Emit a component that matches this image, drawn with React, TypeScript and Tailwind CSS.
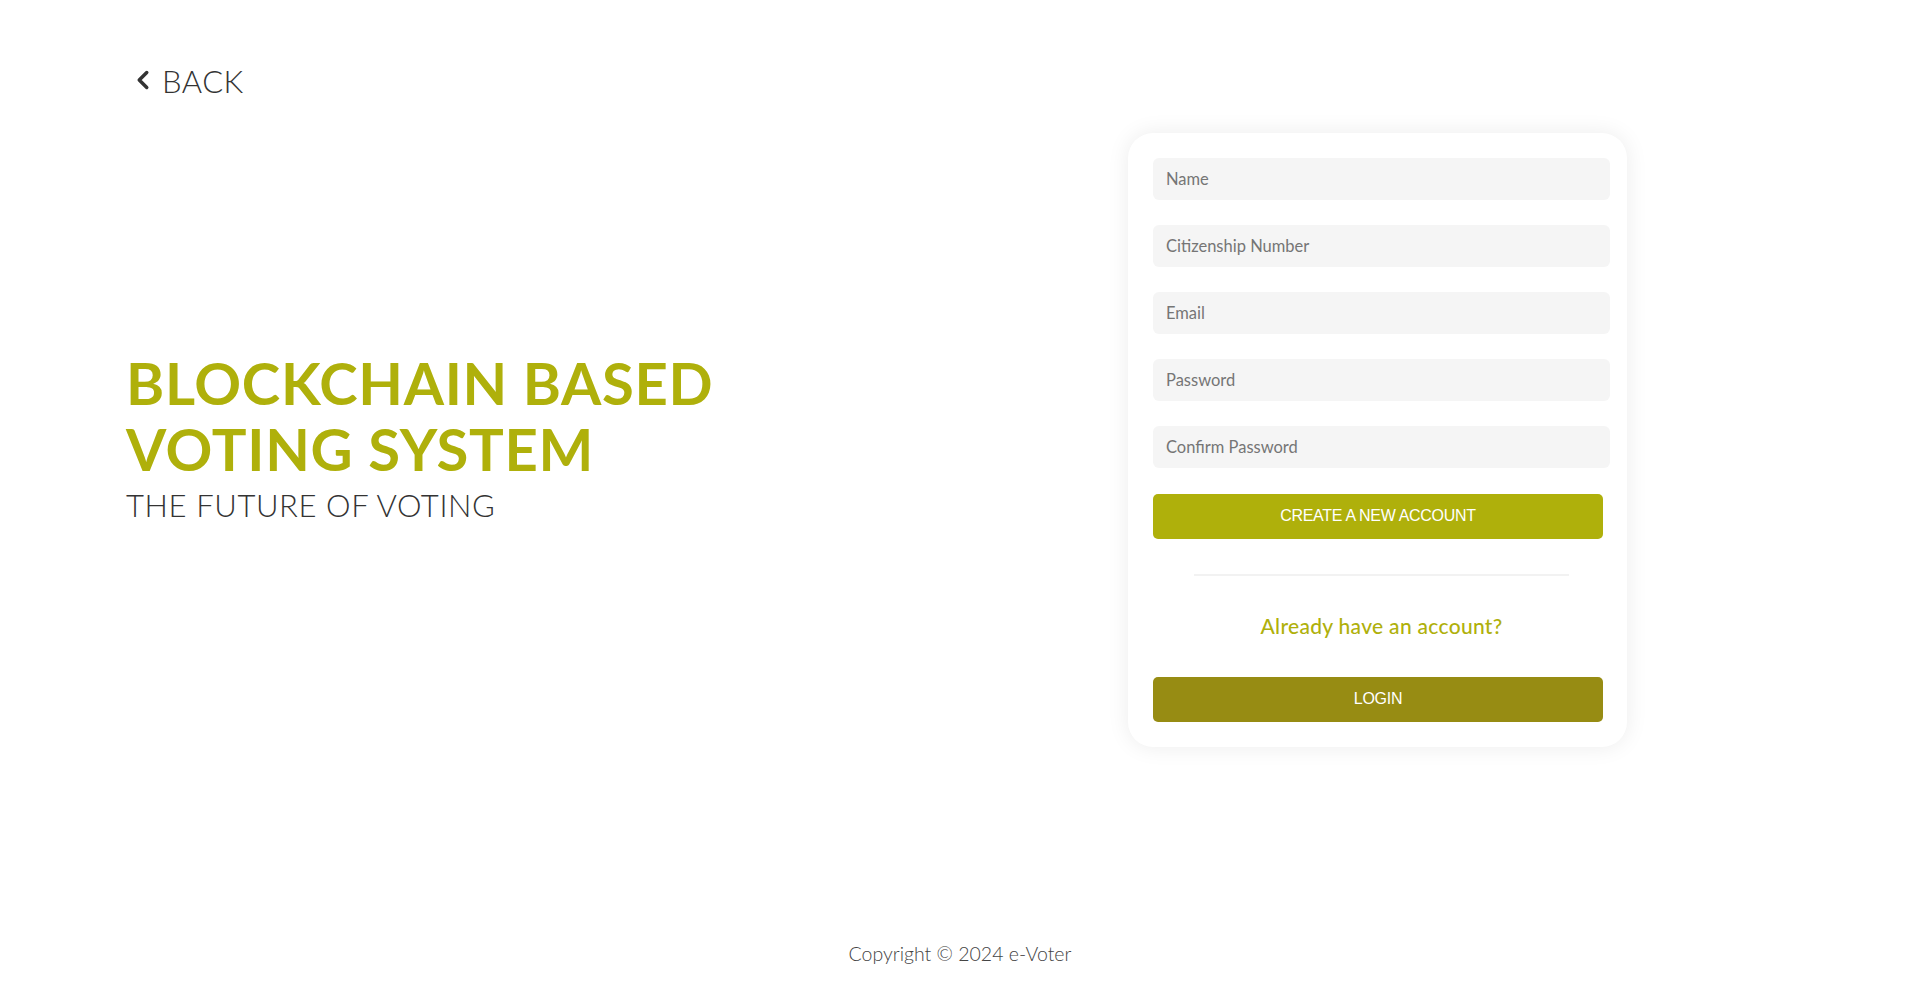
import React from 'react';
import { ChevronLeft } from 'lucide-react';

const fields = ['Name', 'Citizenship Number', 'Email', 'Password', 'Confirm Password'];

const App: React.FC = () => {
  return (
    <div className="min-h-screen h-[991px] bg-white flex flex-col font-['Lato',sans-serif] text-[#333]">
      {/* back link */}
      <div className="pl-[128px] pt-[66px]">
        <a href="#" className="inline-flex items-center gap-[4px] text-[#333] text-[31px] font-light leading-none tracking-[0.5px]">
          <ChevronLeft className="w-[30px] h-[30px] -mt-[4px]" strokeWidth={2.8} />
          BACK
        </a>
      </div>

      {/* main row */}
      <div className="flex items-center pl-[126px] pr-[293px] mt-[32px]">
        <div className="flex-1 pb-[8px]">
          <h1 className="text-[#afb00b] font-bold text-[58px] leading-[66px] tracking-[0.7px]">
            BLOCKCHAIN BASED
            <br />
            VOTING SYSTEM
          </h1>
          <p className="text-[31px] font-light leading-none mt-[8px] tracking-[0.6px]">THE FUTURE OF VOTING</p>
        </div>

        <div className="w-[499px] bg-white rounded-[25px] shadow-[0_0_22px_rgba(0,0,0,0.08)] pl-[25px] pr-[17px] pt-[25px] pb-[25px]">
          <div className="flex flex-col gap-[25px]">
            {fields.map((f) => (
              <input
                key={f}
                type={f.includes('Password') ? 'password' : 'text'}
                placeholder={f}
                className="h-[42px] w-full rounded-[6px] bg-[#f5f5f5] px-[13px] text-[16.5px] text-[#333] placeholder:text-[#757575] outline-none"
              />
            ))}
          </div>
          <button className="mt-[26px] w-[450px] h-[45px] rounded-[5px] bg-[#afb00b] text-white text-[16px] font-['Liberation_Sans',sans-serif] tracking-[-0.3px]">
            CREATE A NEW ACCOUNT
          </button>
          <div className="mx-auto mt-[35px] w-[375px] h-[2px] bg-[#f2f2f2]" />
          <p className="text-center text-[#afb00b] text-[21px] font-medium mt-[38px] leading-[24px] tracking-[0.3px]">
            Already have an account?
          </p>
          <button className="mt-[39px] w-[450px] h-[45px] rounded-[5px] bg-[#978c13] text-white text-[16px] font-['Liberation_Sans',sans-serif] tracking-[-0.3px]">
            LOGIN
          </button>
        </div>
      </div>

      {/* footer */}
      <footer className="mt-auto pb-[23px] text-center text-[19.5px] text-[#444] font-light">
        Copyright © 2024 e-Voter
      </footer>
    </div>
  );
};

export default App;
